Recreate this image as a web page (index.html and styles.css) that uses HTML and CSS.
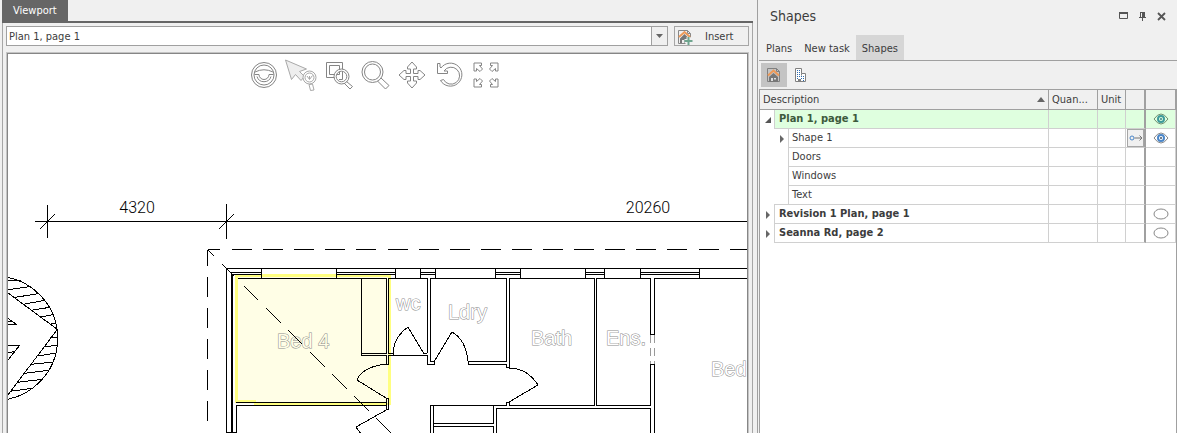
FILE: index.html
```html
<!DOCTYPE html>
<html lang="en">
<head>
<meta charset="utf-8">
<title>Viewport</title>
<link rel="stylesheet" href="styles.css">
</head>
<body>
<div class="app">
  <main class="viewport">
    <div class="viewport-tabs"><button class="viewport-tab">Viewport</button></div>
    <div class="viewport-body">
      <div class="page-bar">
        <div class="combo">
          <select aria-label="Page"><option>Plan 1, page 1</option></select>
          <span class="combo-arrow"><svg width="7" height="4" viewBox="0 0 7 4"><path d="M0 0h7L3.500 4z" fill="#666"/></svg></span>
        </div>
        <button class="insert">
          <svg width="16" height="16" viewBox="0 0 16 16" fill="none">
            <path d="M1.500 14.500v-13h9l3 3v4M10.500 1.500v3h3M1.500 14.500h7" stroke="#888"/>
            <path d="M3 9.500L7.500 5l4 4v1H9v4H7v-3H5v3H3z" fill="#777"/>
            <path d="M2 8l5.500-5L13 8" stroke="#ee9a58" stroke-width="2"/>
            <path d="M11.500 8v8M7.500 12h8" stroke="#f0f0f0" stroke-width="4"/>
            <path d="M11.500 8v8M7.500 12h8" stroke="#6fa58f" stroke-width="2"/>
          </svg>
          <span>Insert</span>
        </button>
      </div>
      <div class="canvas">
        <svg class="drawing" role="img" aria-label="Floor plan">
          <g transform="translate(-8 -54)">
            <path class="room-fill" d="M236 275h154v129H236z"/>
            <path class="room-edge" d="M236.500 274v129M235 275.500h156M389.500 274v130"/>
            <path class="room-edge-thin" d="M236 401h20M254 404h137"/>
            <g class="label">
              <text class="tinted" x="277" y="348">Bed 4</text>
              <text x="396" y="310">wc</text>
              <text x="448" y="319">Ldry</text>
              <text x="531" y="345">Bath</text>
              <text x="606" y="345">Ens.</text>
              <text x="711" y="376">Bed</text>
            </g>
            <g class="dimension">
              <text x="137" y="213">4320</text>
              <text x="648" y="213">20260</text>
            </g>
            <g class="ink">
              <path d="M35 221.500H9000M47.500 205v33M226.500 204v35M40 229l15-15M219 229l15-15"/>
              <path d="M207.500 250v16M208 249.500h12M208 250l6 6M222 264l12 12"/>
              <path d="M207.500 277v150M232 249.500H9000" stroke-dasharray="20 11.100"/>
              <path d="M244 286l14 14M266 308l15 15M288 330l14 14M310 352l15 15M332 374l15 15M354 396l15 15M376 418l15 15"/>
              <path d="M226.500 432V268.500H9000M226 432.500h11M236.500 432V405.500H386M236 402.500H386"/>
              <path d="M232 432V274" stroke-width="2"/>
              <path d="M230 272.500h31M232 274.500h29M336 272.500h59M336 274.500h59M420 272.500h15M420 274.500h15M495 272.500h25M495 274.500h25M585 272.500h19M585 274.500h19M640 272.500h59M640 274.500h59"/>
              <path d="M261.500 268v10M336.500 268v10M395.500 268v10M420.500 268v10M435.500 268v10M495.500 268v10M520.500 268v10M585.500 268v10M604.500 268v10M640.500 268v10M699.500 268v10"/>
              <path d="M238 278.500h149M388 278.500h40M430 278.500h77M509 278.500h86M596 278.500h55M654 278.500H9000"/>
              <path d="M361.500 278v77M361 353.500h25M361 355.500h25M386.500 278v76M388.500 278v76M389 353.500h4v2M389 355.500h39M423 353.500h4M386.500 355v9.500h2V355"/>
              <path d="M408 327l16 27M408 327q-14 10-15 26M386 364q-24 3-29 16l29 18M386.500 398.500h2v11h-2zM388 409l-32 18 5 7"/>
              <path d="M427.500 278v75M427.500 355v9.500h7v-3h-4V278M434 362l18-30q14 8 16 29M506.500 278v83.500h-38v3h38v3h3V278"/>
              <path d="M509 368q18 0 29 17l-29 17M506.500 405v-2.500h3v3h85V278M430 405.500h77M430.500 405v30M433.500 405v30M493.500 405v18.500h-60M433.500 426.500h60v10M496.500 436v-27.500h154v27"/>
              <path d="M596.500 278v127.500h54v-41h4v71M650.500 278v56.500h4V278"/>
              <path class="opening" d="M650.500 335v29M654.500 335v29" stroke-dasharray="8 5"/>
            </g>
            <g class="ink" transform="translate(0 190) scale(.3333)">
              <circle cx="-13" cy="445" r="186"/>
              <path d="M24 309l148 109L24 615"/>
              <path d="M24 272l40-2M24 299l66-9M45 322l71-11M70 343l64-12M92 361l58-9M120 381l40-7M150 403l18-4M150 443l22-2M132 471l41-6M113 498l55-9M93 523l67-7M75 550l72-9M52 577l75-9M30 604l67-9"/>
              <path d="M24 385l26 19H24M24 395l12-1M24 467l35-1-35 44M24 489l18-4"/>
            </g>
          </g>
        </svg>
        <div class="tools">
          <button aria-label="Orbit"><svg viewBox="0 0 32 32"><circle cx="16" cy="16" r="12.500"/><circle cx="16" cy="16" r="10"/><path d="M7 13q9-4.500 18 0M6.500 15.500H11a5 5 0 0 0 10 0h4.500M9 17.500a7.300 7.300 0 0 0 14 0"/></svg></button>
          <button aria-label="Select"><svg class="faint" viewBox="0 0 32 32"><path d="M0.500 1l21 9-7 2.500 5 5-3.500 4-5.500-6-4 5z" fill="#eee"/><circle cx="24.500" cy="18.500" r="6.500" fill="#fff"/><circle cx="24.500" cy="18.500" r="4.500"/><path d="M22 17l2.500 3.500 3-4M24.500 17v3M24 25.500l3.500-.5 1.500 6-3.500.5z"/></svg></button>
          <button aria-label="Zoom window"><svg viewBox="0 0 32 32"><path d="M4.500 3.500h16v15h-16zM7.500 6.500h10v9h-10z"/><circle cx="19.500" cy="17.500" r="7.500" fill="#fff"/><circle cx="19.500" cy="17.500" r="5.300"/><path d="M14.500 15.500h3v-3M17 20.500h3.500V12.500M24.500 22.500l6 5-2.500 2.500-6-6"/></svg></button>
          <button aria-label="Zoom"><svg viewBox="0 0 32 32"><circle cx="13.500" cy="13" r="10.500"/><circle cx="13.500" cy="13" r="8"/><path d="M22 19l8 7.500-3.500 3.500-8-8"/></svg></button>
          <button aria-label="Pan"><svg viewBox="0 0 32 32"><path d="M16 3l4.500 5v2h-3v4.500H22v-3h2l5 4.500-5 4.500h-2v-3h-4.500V22h3v2L16 29l-4.500-5v-2h3v-4.500H10v3H8L3 16l5-4.500h2v3h4.500V10h-3V8z"/></svg></button>
          <button aria-label="Rotate"><svg viewBox="0 0 32 32"><path d="M4.500 4.500v10h10v-2.500h-3.500a8.500 8.500 0 1 1-.5 8.500l-3 1a11.500 11.500 0 1 0 .5-12.500L7 8V4.500z"/></svg></button>
          <button aria-label="Fit"><svg viewBox="0 0 32 32"><g id="corner"><path d="M4 4h7.500v2.500H9.500l3 3.500-2.500 2.500-3.500-3v2.500H4z"/></g><use href="#corner" transform="matrix(-1 0 0 1 32 0)"/><use href="#corner" transform="matrix(1 0 0 -1 0 32)"/><use href="#corner" transform="matrix(-1 0 0 -1 32 32)"/></svg></button>
        </div>
      </div>
    </div>
  </main>
  <aside class="panel">
    <header class="panel-head">
      <h1>Shapes</h1>
      <div class="window-buttons">
        <button aria-label="Maximize"><svg width="9" height="8" viewBox="0 0 9 8"><path d="M.5 1v5.500h8V1" fill="none" stroke="#555"/><path d="M0 0h9v2H0z" fill="#555"/></svg></button>
        <button aria-label="Pin"><svg width="9" height="9" viewBox="0 0 9 9"><path d="M2.500 0v5.500M2 .5h4M1 5.500h7M4.500 5v4" fill="none" stroke="#555"/><path d="M4 0h3v5H4z" fill="#555"/></svg></button>
        <button aria-label="Close"><svg width="9" height="9" viewBox="0 0 9 9"><path d="M1 1l7 7M8 1L1 8" stroke="#555" stroke-width="1.800"/></svg></button>
      </div>
    </header>
    <nav class="panel-tabs">
      <button>Plans</button><button>New task</button><button class="active">Shapes</button>
    </nav>
    <div class="panel-tools">
      <button class="active" aria-label="Page view"><svg width="16" height="16" viewBox="0 0 16 16" fill="none"><path d="M1.500 14.500v-13h9l3 3v10zM10.500 1.500v3h3" stroke="#808080"/><path d="M3 10l4.500-4L12 10v5H3z" fill="#777"/><path d="M5 11h2v3H5zM8 11h2v1.500H8z" fill="#ddd"/><path d="M2 8.500l5.500-5L13 8.500" stroke="#ee9a58" stroke-width="2"/></svg></button>
      <button aria-label="Building view"><svg width="16" height="16" viewBox="0 0 16 16" fill="none"><path d="M3 1h7v5h4v9H3z" fill="#fff"/><path d="M3.500 14.500v-13h6v5h4v8zM9.500 6.500v2" stroke="#808080"/><path d="M5 3.500h1M7 3.500h1M5 5.500h1M7 5.500h1M5 7.500h1M7 7.500h1M5 9.500h1M7 9.500h1M5 11.500h1M9 9.500h1M11 9.500h1M9 11.500h1M11 11.500h1M11 13.500h1" stroke="#2f6cb0"/><path d="M6 12h3v3H6z" fill="#808080"/></svg></button>
    </div>
    <div class="grid">
      <table>
        <colgroup><col><col class="c-qty"><col class="c-unit"><col class="c-link"><col class="c-eye"></colgroup>
        <thead>
          <tr>
            <th><div class="sort">Description<svg width="8" height="5" viewBox="0 0 8 5"><path d="M4 0l4 5H0z" fill="#666"/></svg></div></th>
            <th>Quan...</th><th>Unit</th><th></th><th></th>
          </tr>
        </thead>
        <tbody>
          <tr class="group selected">
            <td><div class="node"><button class="twig" aria-label="Collapse"><svg width="6" height="6" viewBox="0 0 6 6"><path d="M6 0v6H0z" fill="#555"/></svg></button><span class="name">Plan 1, page 1</span></div></td>
            <td></td><td></td><td></td>
            <td><button class="eye" aria-label="Hide"><svg width="16" height="12" viewBox="0 0 16 12" fill="none"><path d="M1 6q7-10 14 0-7 10-14 0z" stroke="#6f9070"/><circle cx="8" cy="6" r="3" stroke="#3d9a9a" stroke-width="2"/><circle cx="8" cy="6" r="1" fill="#3d8088"/></svg></button></td>
          </tr>
          <tr>
            <td><div class="node"><span class="twig"></span><button class="branch" aria-label="Expand"><svg width="4" height="8" viewBox="0 0 4 8"><path d="M0 0l4 4-4 4z" fill="#666"/></svg></button><span class="name">Shape 1</span></div></td>
            <td></td><td></td>
            <td><button class="link" aria-label="Link"><svg width="14" height="8" viewBox="0 0 14 8" fill="none"><circle cx="3" cy="4" r="2" stroke="#4a86c8"/><path d="M5.500 4H13M10.500 1.500L13 4l-2.500 2.500" stroke="#777"/></svg></button></td>
            <td><button class="eye" aria-label="Hide"><svg width="16" height="12" viewBox="0 0 16 12" fill="none"><path d="M1 6q7-10 14 0-7 10-14 0z" stroke="#888"/><circle cx="8" cy="6" r="3" stroke="#4a86c8" stroke-width="2"/><circle cx="8" cy="6" r="1" fill="#456"/></svg></button></td>
          </tr>
          <tr><td><div class="node"><span class="twig"></span><span class="branch"></span><span class="name">Doors</span></div></td><td></td><td></td><td></td><td></td></tr>
          <tr><td><div class="node"><span class="twig"></span><span class="branch"></span><span class="name">Windows</span></div></td><td></td><td></td><td></td><td></td></tr>
          <tr><td><div class="node"><span class="twig"></span><span class="branch end"></span><span class="name">Text</span></div></td><td></td><td></td><td></td><td></td></tr>
          <tr class="group">
            <td><div class="node"><button class="twig" aria-label="Expand"><svg width="4" height="8" viewBox="0 0 4 8"><path d="M0 0l4 4-4 4z" fill="#666"/></svg></button><span class="name">Revision 1 Plan, page 1</span></div></td>
            <td></td><td></td><td></td>
            <td><button class="eye" aria-label="Show"><svg width="16" height="12" viewBox="0 0 16 12"><ellipse cx="8" cy="6" rx="7" ry="5" fill="none" stroke="#888"/></svg></button></td>
          </tr>
          <tr class="group">
            <td><div class="node"><button class="twig" aria-label="Expand"><svg width="4" height="8" viewBox="0 0 4 8"><path d="M0 0l4 4-4 4z" fill="#666"/></svg></button><span class="name">Seanna Rd, page 2</span></div></td>
            <td></td><td></td><td></td>
            <td><button class="eye" aria-label="Show"><svg width="16" height="12" viewBox="0 0 16 12"><ellipse cx="8" cy="6" rx="7" ry="5" fill="none" stroke="#888"/></svg></button></td>
          </tr>
        </tbody>
      </table>
    </div>
  </aside>
</div>
</body>
</html>
```
FILE: styles.css
```css
* { box-sizing: border-box; }
body {
  margin: 0;
  background: #f0f0f0;
  color: #3c3c3c;
  font: 11px/14px "DejaVu Sans Condensed", "DejaVu Sans", sans-serif;
}
button, select {
  margin: 0;
  padding: 0;
  border: 0;
  background: none;
  color: inherit;
  font: inherit;
}
svg { display: block; flex: none; }

.app { display: flex; height: 100vh; overflow: hidden; }

.viewport {
  flex: 1;
  min-width: 0;
  display: flex;
  flex-direction: column;
  padding: 0 4px 0 2px;
}
.viewport-tabs { display: flex; border-bottom: 2px solid #666; }
.viewport-tab { height: 21px; padding: 0 11px; background: #666; color: #fff; }
.viewport-body {
  flex: 1;
  min-height: 0;
  display: flex;
  flex-direction: column;
  gap: 6px;
  padding: 3px 3px 0;
  border: solid #a6a6a6;
  border-width: 0 1px;
}
.page-bar { display: flex; gap: 6px; height: 20px; }
.combo { position: relative; flex: 1; background: #fff; border: 1px solid #a0a0a0; }
.combo select { width: 100%; height: 18px; padding: 1px 2px 0; appearance: none; }
.combo-arrow {
  position: absolute;
  inset: 0 0 0 auto;
  width: 16px;
  display: grid;
  place-items: center;
  background: #f0f0f0;
  border-left: 1px solid #a0a0a0;
  pointer-events: none;
}
.insert {
  display: flex;
  align-items: center;
  gap: 12px;
  width: 75px;
  padding: 1px 0 0 2px;
  border: 1px solid #a6a6a6;
}

.canvas {
  position: relative;
  flex: 1;
  min-height: 0;
  margin: 1px 1px 0;
  overflow: hidden;
  background: #fff;
  border: 1px solid #868686;
  border-bottom: 0;
  outline: 1px solid #c4c4c4;
}
.drawing { width: 100%; height: 100%; }
.ink { fill: none; stroke: #000; shape-rendering: crispEdges; }
.ink path, .ink circle { vector-effect: non-scaling-stroke; }
.ink .opening { stroke: #999; }
.room-fill { fill: #fffee6; }
.room-edge, .room-edge-thin { fill: none; stroke: #ffff80; stroke-width: 3; shape-rendering: crispEdges; }
.room-edge-thin { stroke-width: 2; }
.label {
  font: 20px "Liberation Sans", Arial, sans-serif;
  fill: #fff;
  stroke: #8c8c8c;
  stroke-width: 1;
  paint-order: stroke;
}
.label .tinted { fill: #fffee6; }
.dimension { font: 300 16px Roboto, sans-serif; fill: #000; text-anchor: middle; }

.tools {
  position: absolute;
  top: 5px;
  left: 0;
  right: 5px;
  display: flex;
  justify-content: center;
}
.tools button { width: 37px; display: grid; place-items: center; }
.tools svg { width: 32px; height: 32px; fill: none; stroke: #858585; }
.tools .faint { stroke: #a8a8a8; }

.panel {
  width: 420px;
  display: flex;
  flex-direction: column;
  border-left: 1px solid #a0a0a0;
}
.panel-head { display: flex; justify-content: space-between; height: 35px; padding: 6px 11px 0 12px; }
h1 { margin: 0; font-size: 14px; line-height: 20px; font-weight: 400; }
.window-buttons { display: flex; gap: 10px; height: 20px; align-items: center; }
.panel-tabs { display: flex; height: 26px; margin-left: 1px; padding-left: 1px; border-bottom: 1px solid #a0a0a0; }
.panel-tabs button { padding: 2px 6px 0; }
.panel-tabs .active { background: #d6d6d6; }
.panel-tools { display: flex; height: 28px; padding: 2px 3px; }
.panel-tools button { width: 26px; display: grid; place-items: center; }
.panel-tools .active { background: #c4c4c4; }

.grid {
  flex: 1;
  min-height: 0;
  margin-left: 1px;
  background: #fff;
  border: solid #a0a0a0;
  border-width: 1px 1px 0;
}
table { width: 100%; table-layout: fixed; border-collapse: separate; border-spacing: 0; }
.c-qty { width: 49px; }
.c-unit { width: 28px; }
.c-link { width: 20px; }
.c-eye { width: 30px; }
th {
  height: 20px;
  padding: 0 3px;
  background: #f0f0f0;
  border: solid #a0a0a0;
  border-width: 0 1px 1px 0;
  font-weight: 400;
  text-align: left;
  white-space: nowrap;
}
td { height: 19px; padding: 0; border: solid #d0d0d0; border-width: 0 1px 1px 0; }
td:first-child { border-bottom: 0; }
th:nth-child(4), td:nth-child(4) { border-right: 2px solid #a0a0a0; }
.sort { display: flex; align-items: center; justify-content: space-between; }
.node { display: flex; height: 19px; }
.twig, .branch { flex: none; width: 14px; display: grid; place-items: center; padding: 1px 0 0 2px; }
.branch.end { border-bottom: 1px solid #d0d0d0; }
.name { flex: 1; padding: 2px 4px; border: solid #d0d0d0; border-width: 0 0 1px 1px; white-space: nowrap; }
.branch + .name { padding-left: 3px; }
.group .name { font-weight: 700; }
.selected .name, .selected td:not(:first-child) { background: #dfffdf; }
.selected .name { color: #3c5a3c; }
.eye { display: grid; place-items: center; width: 100%; height: 18px; }
.link { display: grid; place-items: center; width: 17px; height: 18px; margin-left: 1px; background: #f0f0f0; border: 1px solid #a6a6a6; }
```
